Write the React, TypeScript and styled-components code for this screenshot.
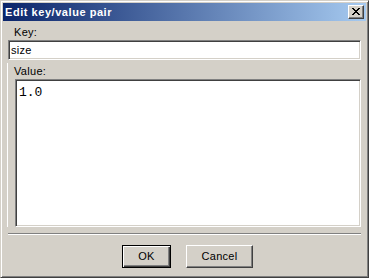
import React from "react";
import styled, { createGlobalStyle } from "styled-components";

const FACE = "#D4D0C8";
const SHADOW = "#808080";
const DARK = "#404040";
const UI_FONT = `"Liberation Sans", Arial, sans-serif`;

const Global = createGlobalStyle`
    html, body {
        margin: 0;
        padding: 0;
        background: ${FACE};
    }
    * {
        box-sizing: border-box;
    }
`;

const Frame = styled.div`
    width: 369px;
    height: 278px;
    background: ${FACE};
    border-style: solid;
    border-width: 1px;
    border-color: ${FACE} ${DARK} ${DARK} ${FACE};
    box-shadow: inset 1px 1px 0 #fff, inset -1px -1px 0 ${SHADOW};
    padding: 3px;
    display: flex;
    flex-direction: column;
    font-family: ${UI_FONT};
    font-size: 11px;
    color: #000;
`;

const TitleBar = styled.div`
    height: 18px;
    margin: -1px;
    background: linear-gradient(to right, #0A246A, #A6CAF0);
    display: flex;
    align-items: center;
    justify-content: space-between;
    padding: 0 2px;
`;

const TitleText = styled.span`
    color: #fff;
    font-weight: bold;
    font-size: 11px;
    line-height: 13px;
    letter-spacing: 0.55px;
`;

const CaptionButton = styled.div`
    width: 16px;
    height: 14px;
    background: ${FACE};
    border-style: solid;
    border-width: 1px;
    border-color: #fff ${DARK} ${DARK} #fff;
    box-shadow: inset -1px -1px 0 ${SHADOW};
    display: flex;
    align-items: center;
    justify-content: center;
    padding-bottom: 1px;
`;

const Body = styled.div`
    flex: 1;
    display: flex;
    flex-direction: column;
    padding: 0 4px 4px 4px;
`;

const Label = styled.div`
    height: 13px;
    line-height: 13px;
    padding-left: ${props => props.$indent}px;
    margin: ${props => props.$top}px 0 1px 0;
    letter-spacing: 0.3px;
`;

const Sunken = styled.div`
    background: #fff;
    border-style: solid;
    border-width: 1px;
    border-color: ${SHADOW} #fff #fff ${SHADOW};
    box-shadow: inset 1px 1px 0 ${DARK}, inset -1px -1px 0 ${FACE};
`;

const KeyField = styled(Sunken)`
    height: 20px;
    padding: 2px 3px 0 2px;
    line-height: 15px;
    letter-spacing: 0.3px;
`;

const ValuePanel = styled.div`
    display: flex;
    flex-direction: column;
    margin-top: 3px;
    border-left: 1px solid #fff;
    margin-left: -1px;
    padding-left: 1px;
`;

const ValueArea = styled(Sunken)`
    height: 148px;
    margin-left: 6px;
    padding: 5px 3px 0 3px;
    font-family: "Liberation Mono", "Courier New", monospace;
    font-size: 13px;
    line-height: 15px;
`;

const Separator = styled.div`
    height: 2px;
    margin-top: 6px;
    border-top: 1px solid ${SHADOW};
    border-bottom: 1px solid #fff;
`;

const ButtonRow = styled.div`
    display: flex;
    justify-content: center;
    gap: 15px;
    margin-top: 10px;
    padding-left: 6px;
`;

const Button = styled.div`
    width: ${props => props.$width}px;
    height: 23px;
    display: flex;
    align-items: center;
    justify-content: center;
    background: ${FACE};
    border-style: solid;
    border-width: 1px;
    border-color: ${props => props.$default ? "#000" : `#fff ${DARK} ${DARK} #fff`};
    box-shadow: ${props => props.$default
        ? `inset 1px 1px 0 #fff, inset -1px -1px 0 ${DARK}, inset -2px -2px 0 ${SHADOW}`
        : `inset -1px -1px 0 ${SHADOW}`};
    line-height: 13px;
    letter-spacing: 0.3px;
`;

const CloseIcon = () => (
    <svg width="8" height="7" viewBox="0 0 8 7" shapeRendering="crispEdges">
        <path d="M0 0h2v1h-2zM6 0h2v1h-2zM1 1h2v1h-2zM5 1h2v1h-2zM2 2h4v1h-4zM3 3h2v1h-2zM2 4h4v1h-4zM1 5h2v1h-2zM5 5h2v1h-2zM0 6h2v1h-2zM6 6h2v1h-2z" fill="#000" />
    </svg>
);

const App = () => (
    <>
        <Global />
        <Frame>
            <TitleBar>
                <TitleText>Edit key/value pair</TitleText>
                <CaptionButton><CloseIcon /></CaptionButton>
            </TitleBar>
            <Body>
                <Label $top={6} $indent={6}>Key:</Label>
                <KeyField>size</KeyField>
                <ValuePanel>
                    <Label $top={2} $indent={5}>Value:</Label>
                    <ValueArea>1.0</ValueArea>
                </ValuePanel>
                <Separator />
                <ButtonRow>
                    <Button $width={49} $default>OK</Button>
                    <Button $width={67}>Cancel</Button>
                </ButtonRow>
            </Body>
        </Frame>
    </>
);

export default App;
